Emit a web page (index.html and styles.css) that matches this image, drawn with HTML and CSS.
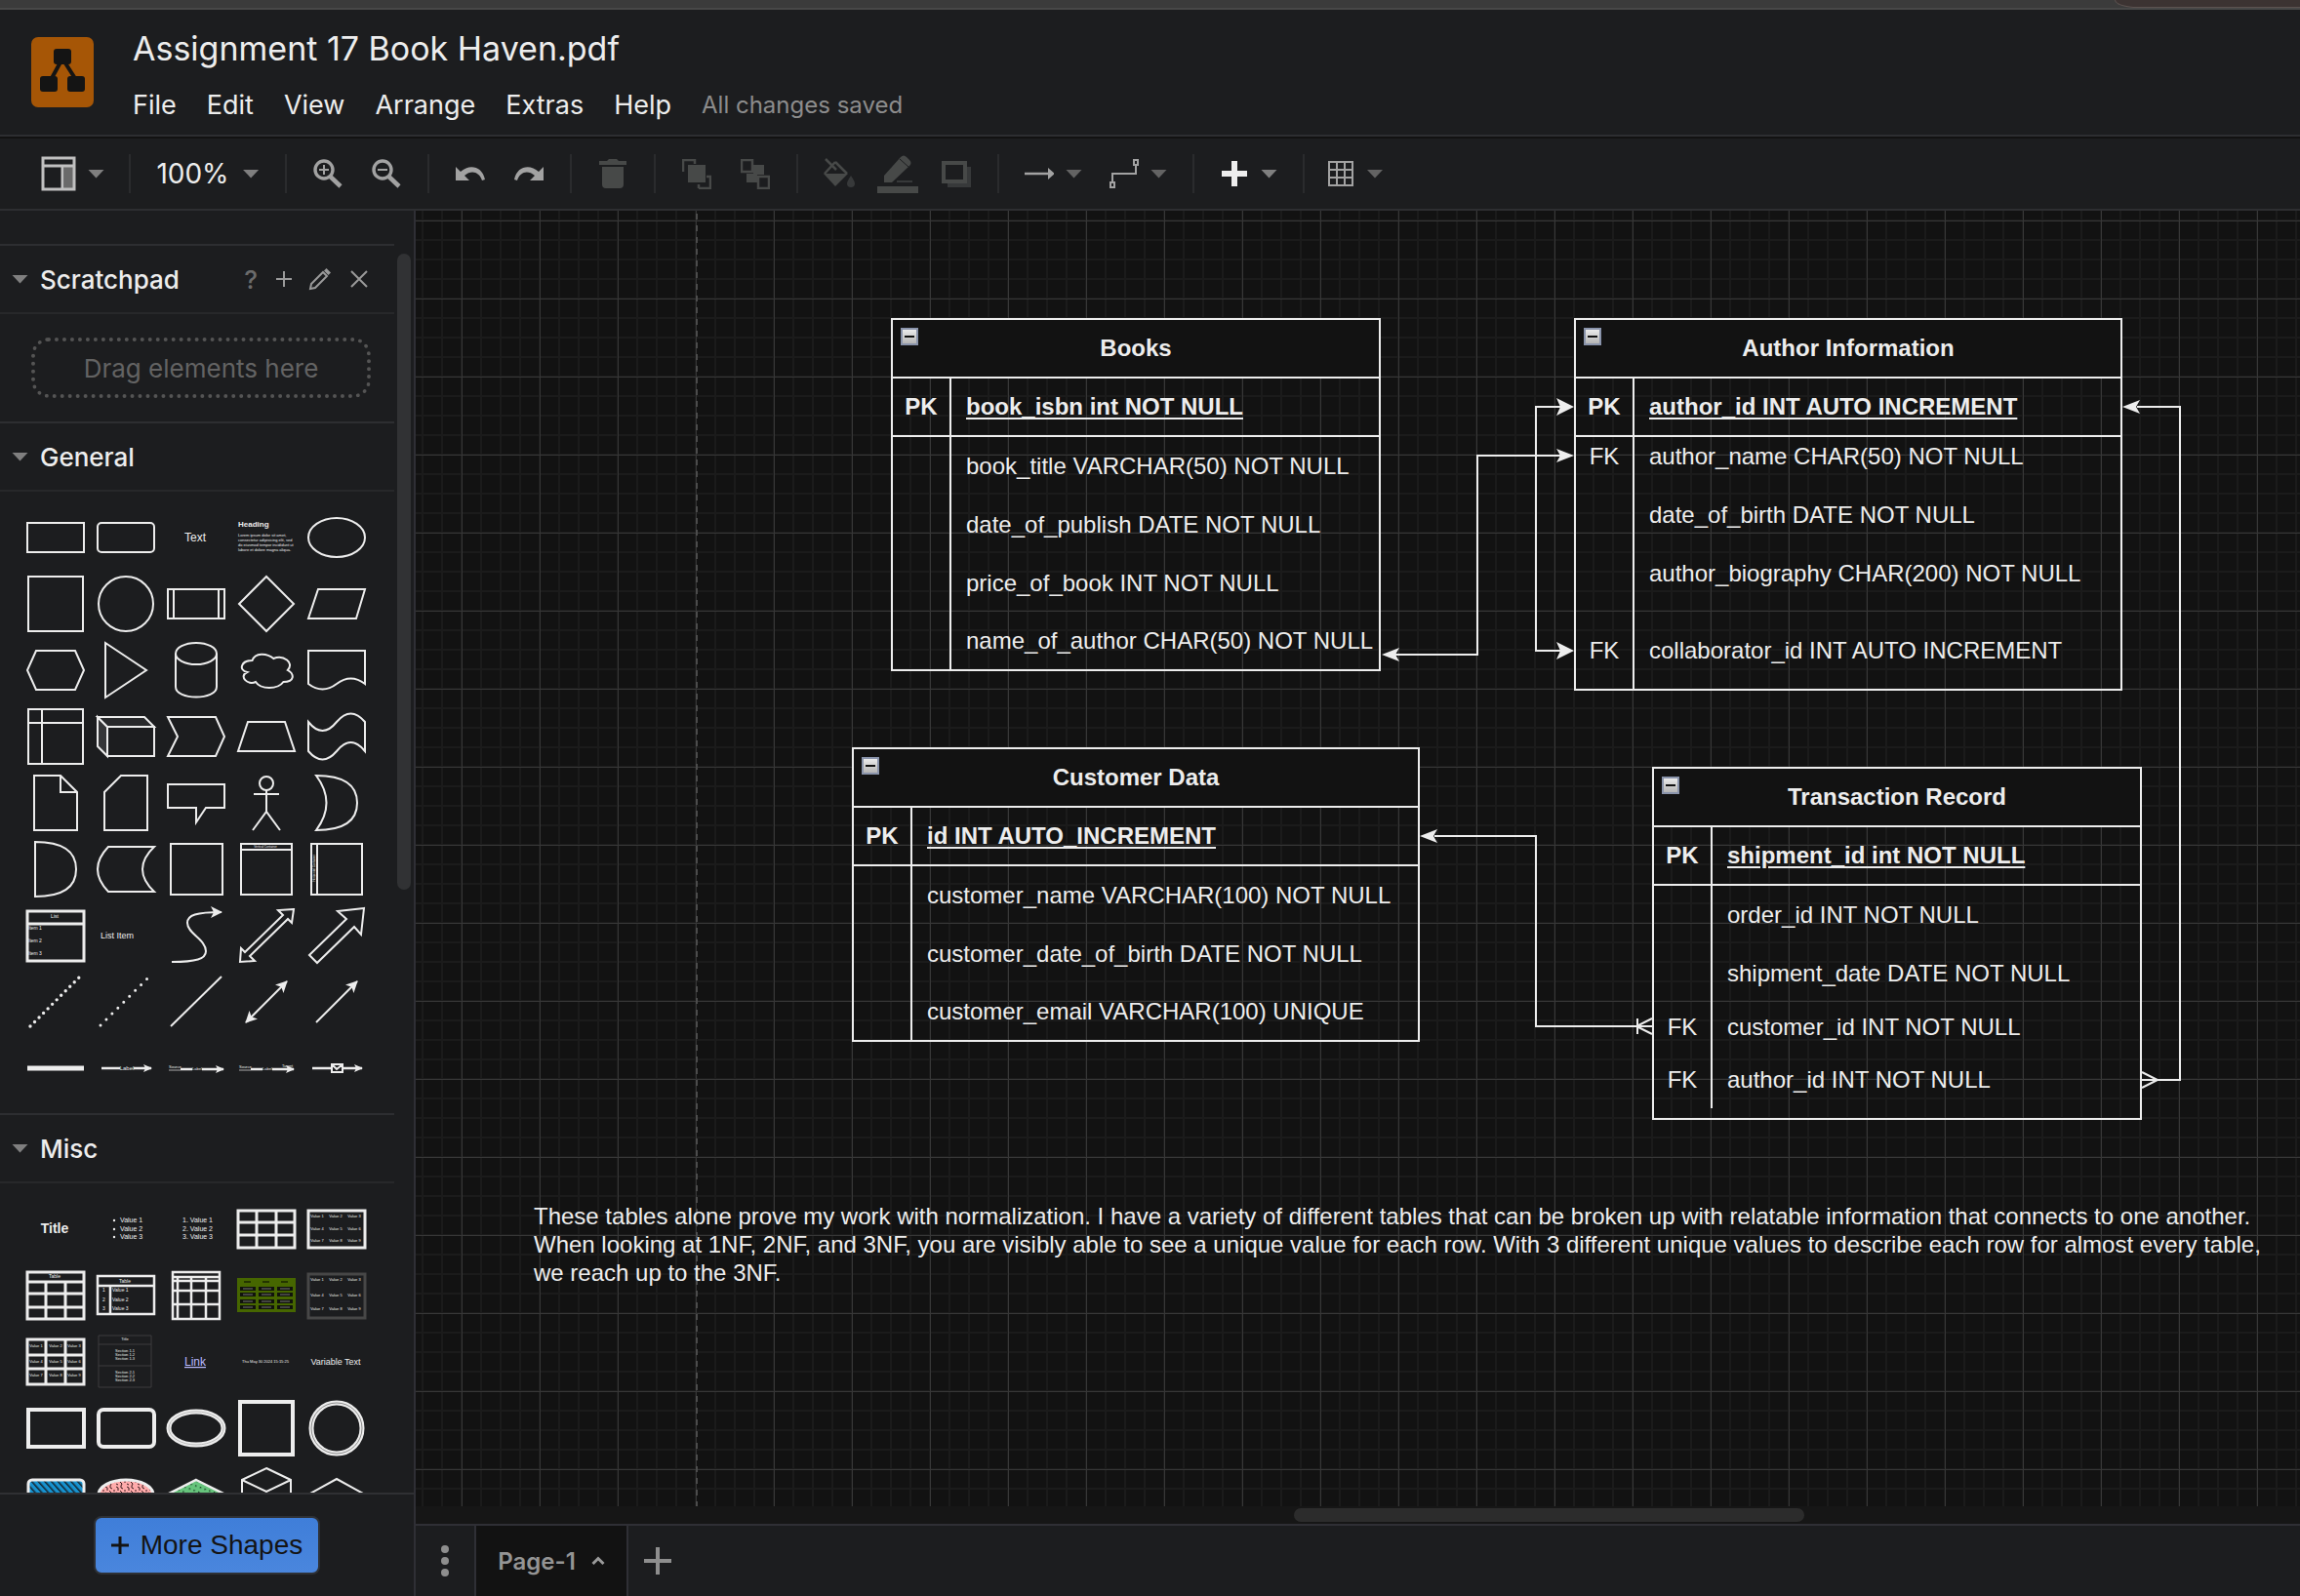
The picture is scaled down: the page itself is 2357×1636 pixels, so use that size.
FILE: index.html
```html
<!DOCTYPE html>
<html lang="en">
<head>
<meta charset="utf-8">
<title>Assignment 17 Book Haven.pdf</title>
<link rel="stylesheet" href="styles.css">
</head>
<body>
<svg class="defs" aria-hidden="true">
  <defs>
    <marker id="tip" viewBox="0 -6 12 12" refX="11" refY="0" markerWidth="12" markerHeight="12" markerUnits="userSpaceOnUse" orient="auto-start-reverse"><path d="M12 0L0 -6L3 0L0 6Z" fill="#ededed"/></marker>
    <marker id="tip-s" viewBox="0 -4 9 8" refX="8" refY="0" markerWidth="9" markerHeight="8" markerUnits="userSpaceOnUse" orient="auto"><path d="M9 0L0 -4L2 0L0 4Z" fill="#ededed"/></marker>
    <pattern id="hatch" width="5" height="5" patternUnits="userSpaceOnUse" patternTransform="rotate(-42)"><rect width="5" height="5" fill="#1792cf"/><rect width="1.5" height="5" fill="#14222c"/></pattern>
    <pattern id="scribble" width="11" height="9" patternUnits="userSpaceOnUse"><rect width="11" height="9" fill="#ffabab"/><path d="M1 1l2 1v3M6 0v2l2 1M5 5l2 2-1 2M10 4v2M1 7l2 1" stroke="#3a1c1e" fill="none"/></pattern>
    <pattern id="dots" width="5" height="5" patternUnits="userSpaceOnUse" patternTransform="rotate(20)"><rect width="5" height="5" fill="#66c47c"/><rect x="1" y="1" width="1.4" height="1.4" fill="#14331e"/></pattern>
  </defs>
</svg>

<div class="app">
  <div class="browser-edge"><span class="browser-tab"></span></div>

  <header class="header">
    <svg class="logo" viewBox="0 0 64 72" role="img" aria-label="draw.io"><rect width="64" height="72" rx="7" fill="#a65606"/><path d="M32 22L20 44M32 22L46 44" stroke="#141414" stroke-width="4"/><g fill="#141414"><rect x="23" y="12" width="18" height="16" rx="3"/><rect x="9" y="40" width="18" height="16" rx="3"/><rect x="37" y="40" width="18" height="16" rx="3"/></g></svg>
    <div class="header-text">
      <h1 class="title">Assignment 17 Book Haven.pdf</h1>
      <nav class="menu">
        <button class="menu-item" type="button">File</button>
        <button class="menu-item" type="button">Edit</button>
        <button class="menu-item" type="button">View</button>
        <button class="menu-item" type="button">Arrange</button>
        <button class="menu-item" type="button">Extras</button>
        <button class="menu-item" type="button">Help</button>
        <span class="status">All changes saved</span>
      </nav>
    </div>
  </header>

  <div class="toolbar" role="toolbar">
    <div class="tools">
      <button class="tool tool-menu" type="button" aria-label="Format panel"><svg width="36" height="36" viewBox="0 0 36 36"><rect x="24" y="11" width="10" height="22" fill="#6a6a6a"/><path d="M2 2H34V34H2ZM2 10H34M22 10V34" fill="none" stroke="#c0c0c0" stroke-width="3"/></svg><span class="caret"></span></button>
    </div>
    <div class="tools">
      <button class="tool tool-zoom" type="button">100%<span class="caret"></span></button>
    </div>
    <div class="tools">
      <button class="tool" type="button" aria-label="Zoom in"><svg width="30" height="30" viewBox="0 0 30 30" fill="none" stroke="#a2a2a2"><circle cx="11" cy="11" r="9" stroke-width="3.4"/><path d="M17.500 18L28 28" stroke-width="4.500"/><path d="M6 11H16M11 6V16" stroke-width="2"/></svg></button>
      <button class="tool" type="button" aria-label="Zoom out"><svg width="30" height="30" viewBox="0 0 30 30" fill="none" stroke="#a2a2a2"><circle cx="11" cy="11" r="9" stroke-width="3.4"/><path d="M17.500 18L28 28" stroke-width="4.500"/><path d="M6 11H16" stroke-width="2"/></svg></button>
    </div>
    <div class="tools">
      <button class="tool" type="button" aria-label="Undo"><svg width="32" height="30" viewBox="0 0 32 30"><path d="M1 8V22H15L10 17C17 11 25 13 28 22L31 21C28 7 15 5 6 13Z" fill="#a2a2a2"/></svg></button>
      <button class="tool" type="button" aria-label="Redo"><svg width="32" height="30" viewBox="0 0 32 30"><path d="M31 8V22H17L22 17C15 11 7 13 4 22L1 21C4 7 17 5 26 13Z" fill="#a2a2a2"/></svg></button>
    </div>
    <div class="tools">
      <button class="tool" type="button" aria-label="Delete"><svg width="30" height="30" viewBox="0 0 30 30" fill="#474948"><path d="M1 2H9L11 0H19L21 2H29V6H1ZM4 8H26V26Q26 30 22 30H8Q4 30 4 26Z"/></svg></button>
    </div>
    <div class="tools">
      <button class="tool" type="button" aria-label="To front"><svg width="30" height="31" viewBox="0 0 30 31"><rect x="6" y="6" width="18" height="18" fill="#474948"/><path d="M1 13V1H13V5M17 30H29V18H25M17 26V30" fill="none" stroke="#474948" stroke-width="2.500"/></svg></button>
      <button class="tool" type="button" aria-label="To back"><svg width="30" height="31" viewBox="0 0 30 31"><path d="M13 6H24V16H17V24H6V15H13Z" fill="#474948"/><path d="M1 1H12V13H1ZM18 18H29V30H18Z" fill="none" stroke="#474948" stroke-width="2.500"/></svg></button>
    </div>
    <div class="tools">
      <button class="tool" type="button" aria-label="Fill color"><svg width="32" height="32" viewBox="0 0 32 32"><path d="M2 1L13 12M12 4L1 16M12 4L24 16" stroke="#474948" stroke-width="2.500" fill="none"/><path d="M0 16H25L12 29Z" fill="#474948"/><path d="M28 18Q32 24 32 26A4 4 0 0 1 24 26Q24 24 28 18Z" fill="#37393a"/></svg></button>
      <button class="tool" type="button" aria-label="Line color"><svg width="42" height="40" viewBox="0 0 42 40"><path d="M7 29V22L24 3Q27 0 30 3L33 6Q36 9 33 12L15 29Z" fill="#474948"/><path d="M23 5L32 13" stroke="#1c1d1f"/><path d="M20 28H36" stroke="#37393a" stroke-width="2"/><rect y="33" width="42" height="7" fill="#474948"/></svg></button>
      <button class="tool" type="button" aria-label="Shadow"><svg width="30" height="27" viewBox="0 0 30 27"><path d="M26 6H30V27H6V23H26Z" fill="#37393a"/><rect x="2" y="2" width="22" height="19" fill="none" stroke="#474948" stroke-width="4"/></svg></button>
    </div>
    <div class="tools">
      <button class="tool tool-menu" type="button" aria-label="Connection"><svg width="30" height="30" viewBox="0 0 30 30"><path d="M0 15H26" stroke="#a2a2a2" stroke-width="2.500"/><path d="M24 9L31 15L24 21Z" fill="#a2a2a2"/></svg><span class="caret caret-dim"></span></button>
      <button class="tool tool-menu" type="button" aria-label="Waypoints"><svg width="30" height="30" viewBox="0 0 30 30" fill="none" stroke="#a2a2a2" stroke-width="2"><rect x="1" y="24" width="4" height="5"/><rect x="25" y="1" width="4" height="5"/><path d="M3 24V15H27V6"/></svg><span class="caret caret-dim"></span></button>
    </div>
    <div class="tools">
      <button class="tool tool-menu" type="button" aria-label="Insert"><svg width="30" height="30" viewBox="0 0 30 30"><path d="M15 2V28M2 15H28" stroke="#ededed" stroke-width="6"/></svg><span class="caret"></span></button>
    </div>
    <div class="tools">
      <button class="tool tool-grid" type="button" aria-label="Table"><svg width="26" height="26" viewBox="0 0 26 26"><path d="M1 1H25V25H1ZM1 9H25M1 17H25M9 1V25M17 1V25" fill="none" stroke="#a2a2a2" stroke-width="2"/></svg><span class="caret caret-dim"></span></button>
    </div>
  </div>

  <div class="workspace">
    <aside class="sidebar">
      <div class="sidebar-scroll">
        <div class="sections">
          <section class="section">
            <div class="section-head"><span class="caret"></span><h2 class="section-title">Scratchpad</h2>
              <div class="section-tools">
                <button class="mini help" type="button">?</button>
                <button class="mini" type="button" aria-label="Add"><svg width="24" height="24" viewBox="0 0 24 24"><path d="M12 4V20M4 12H20" stroke="#9a9a9a" stroke-width="2"/></svg></button>
                <button class="mini mini-wide" type="button" aria-label="Edit"><svg width="24" height="24" viewBox="0 0 24 24"><path d="M2 22L3 17L15 5L19 9L7 21Z" fill="none" stroke="#9a9a9a" stroke-width="2"/><path d="M16 3.500L18.500 1L23 5.500L20.500 8Z" fill="#9a9a9a"/></svg></button>
                <button class="mini mini-wide" type="button" aria-label="Close"><svg width="24" height="24" viewBox="0 0 24 24"><path d="M4 4L20 20M20 4L4 20" stroke="#9a9a9a" stroke-width="2"/></svg></button>
              </div>
            </div>
            <div class="drop-wrap"><div class="drop">Drag elements here</div></div>
          </section>

          <section class="section">
            <div class="section-head"><span class="caret"></span><h2 class="section-title">General</h2></div>
            <div class="palette">
              <svg class="shape" viewBox="-36 -34 72 68"><rect x="-29" y="-15" width="58" height="30"/></svg>
              <svg class="shape" viewBox="-36 -34 72 68"><rect x="-29" y="-15" width="58" height="30" rx="4"/></svg>
              <svg class="shape" viewBox="-36 -34 72 68"><text class="mid t12" x="-1" y="4">Text</text></svg>
              <svg class="shape" viewBox="-36 -34 72 68"><text class="t8 bold" x="-29" y="-11">Heading</text><text class="t4" x="-29" y="-1">Lorem ipsum dolor sit amet,</text><text class="t4" x="-29" y="4">consectetur adipisicing elit, sed</text><text class="t4" x="-29" y="9">do eiusmod tempor incididunt ut</text><text class="t4" x="-29" y="14">labore et dolore magna aliqua.</text></svg>
              <svg class="shape" viewBox="-36 -34 72 68"><ellipse rx="29" ry="20"/></svg>

              <svg class="shape" viewBox="-36 -34 72 68"><rect x="-28" y="-28" width="56" height="56"/></svg>
              <svg class="shape" viewBox="-36 -34 72 68"><circle r="28"/></svg>
              <svg class="shape" viewBox="-36 -34 72 68"><path d="M-29-15H29V15H-29ZM-23-15V15M23-15V15"/></svg>
              <svg class="shape" viewBox="-36 -34 72 68"><path d="M0-28L28 0L0 28L-28 0Z"/></svg>
              <svg class="shape" viewBox="-36 -34 72 68"><path d="M-19-15H29L20 15H-29Z"/></svg>

              <svg class="shape" viewBox="-36 -34 72 68"><path d="M-20-20H20L29 0L20 20H-20L-29 0Z"/></svg>
              <svg class="shape" viewBox="-36 -34 72 68"><path d="M-21-28L21 0L-21 28Z"/></svg>
              <svg class="shape" viewBox="-36 -34 72 68"><ellipse cy="-17" rx="21" ry="11"/><path d="M-21-17V17C-21 31 21 31 21 17V-17"/></svg>
              <svg class="shape" viewBox="-36 -34 72 68"><path d="M-14.500-10C-26-10-29 0-19.700 2C-29 6.400-18.600 16-11 12C-5.800 20 11.600 20 17.400 12C29 12 29 4 21.800 0C29-8 17.400-16 7.300-12C0-18-11.600-18-14.500-10Z"/></svg>
              <svg class="shape" viewBox="-36 -34 72 68"><path d="M-29-20H29V14Q14.500 3 0 14Q-14.500 25-29 14Z"/></svg>

              <svg class="shape" viewBox="-36 -34 72 68"><path d="M-28-28H28V28H-28ZM-28-14H28M-14-28V28"/></svg>
              <svg class="shape" viewBox="-36 -34 72 68"><path d="M-29-20L-19-10V20L-29 10Z" fill="#353638"/><path d="M-29-20H19L29-10H-19Z" fill="#28292b"/><path d="M-19-10H29V20H-19Z"/></svg>
              <svg class="shape" viewBox="-36 -34 72 68"><path d="M-29-20H20L29 0L20 20H-29L-19 0Z"/></svg>
              <svg class="shape" viewBox="-36 -34 72 68"><path d="M-19-15H19L29 15H-29Z"/></svg>
              <svg class="shape" viewBox="-36 -34 72 68"><path d="M-29-15Q-14.500 3 0-15Q14.500-32 29-15V15Q14.500-3 0 15Q-14.500 32-29 15Z"/></svg>

              <svg class="shape" viewBox="-36 -34 72 68"><path d="M-22-28H5L22-11V28H-22ZM5-28V-11H22"/></svg>
              <svg class="shape" viewBox="-36 -34 72 68"><path d="M-5-28H22V28H-22V-11Z"/></svg>
              <svg class="shape" viewBox="-36 -34 72 68"><path d="M-29-19H29V5H10L0 20V5H-29Z"/></svg>
              <svg class="shape" viewBox="-36 -34 72 68"><circle cy="-20" r="7"/><path d="M0-13V9M-13-9H13M-14 28L0 9L14 28"/></svg>
              <svg class="shape" viewBox="-36 -34 72 68"><path d="M-21-28Q21-28 21 0Q21 28-21 28Q0 0-21-28Z"/></svg>

              <svg class="shape" viewBox="-36 -34 72 68"><path d="M-21-28Q21-28 21 0Q21 28-21 28Z"/></svg>
              <svg class="shape" viewBox="-36 -34 72 68"><path d="M-18-23H29Q5 0 29 23H-18Q-40 0-18-23Z"/></svg>
              <svg class="shape" viewBox="-36 -34 72 68"><rect x="-26" y="-26" width="53" height="52"/></svg>
              <svg class="shape" viewBox="-36 -34 72 68"><path d="M-26-26H26V26H-26ZM-26-20H26"/><text class="mid t3" x="-1" y="-22">Vertical Container</text></svg>
              <svg class="shape" viewBox="-36 -34 72 68"><path d="M-26-26H26V26H-26ZM-20-26V26"/><text class="mid t3" transform="rotate(-90)" x="1" y="-22">Horizontal Container</text></svg>

              <svg class="shape" viewBox="-36 -34 72 68"><path d="M-29-25H29V26H-29ZM-29-12H29" stroke-width="3"/><text class="mid t5" x="-1" y="-18">List</text><text class="t5" x="-28" y="-6">Item 1</text><text class="t5" x="-28" y="7">Item 2</text><text class="t5" x="-28" y="20">Item 3</text></svg>
              <svg class="shape" viewBox="-36 -34 72 68"><text class="t9" x="-26" y="3">List Item</text></svg>
              <svg class="shape" viewBox="-36 -34 72 68"><path d="M-25 27C0 27 10 24 10 16C10 4-9-2-9-13C-9-21 0-24 26-24" marker-end="url(#tip)"/></svg>
              <svg class="shape" viewBox="-36 -34 72 68"><path d="M28-27L12-26L17-21L-22 17L-26 13L-27 27L-12 26L-17 21L22-17L26-13Z"/></svg>
              <svg class="shape" viewBox="-36 -34 72 68"><path d="M28-28L1-25L10-17L-28 20L-20 28L18-9L25-1Z"/></svg>

              <svg class="shape" viewBox="-36 -34 72 68"><path d="M-26 25L24-25" stroke-width="3.400" stroke-linecap="round" stroke-dasharray="0 6.400"/></svg>
              <svg class="shape" viewBox="-36 -34 72 68"><path d="M-26 24L22-24" stroke-width="3" stroke-linecap="round" stroke-dasharray="0 8.400"/></svg>
              <svg class="shape" viewBox="-36 -34 72 68"><path d="M-26 25L26-26"/></svg>
              <svg class="shape" viewBox="-36 -34 72 68"><path d="M-21 21L21-21" marker-start="url(#tip)" marker-end="url(#tip)"/></svg>
              <svg class="shape" viewBox="-36 -34 72 68"><path d="M-21 21L21-21" marker-end="url(#tip)"/></svg>

              <svg class="shape" viewBox="-36 -34 72 68"><path d="M-29 0H29" stroke-width="5"/></svg>
              <svg class="shape" viewBox="-36 -34 72 68"><path d="M-25 0H-6M8 0H26" stroke-width="2.500" marker-end="url(#tip-s)"/><text class="mid t6" x="1" y="2">Label</text></svg>
              <svg class="shape" viewBox="-36 -34 72 68"><path d="M-28 2H-16" stroke="#aaa" stroke-width="1"/><path d="M-16 1H-4M6 1H28" stroke-width="2.500" marker-end="url(#tip-s)"/><text class="t4" x="-28" y="0">Source</text><text class="mid t4" x="1" y="2">Label</text></svg>
              <svg class="shape" viewBox="-36 -34 72 68"><path d="M-28 2H-16" stroke="#aaa" stroke-width="1"/><path d="M-16 1H-4M6 1H28" stroke-width="2.500" marker-end="url(#tip-s)"/><text class="t4" x="-28" y="0">Source</text><text class="mid t4" x="1" y="2">Label</text><text class="t4" x="16" y="-1">Target</text></svg>
              <svg class="shape" viewBox="-36 -34 72 68"><path d="M-25 0H-6M6 0H26" stroke-width="2.500" marker-end="url(#tip-s)"/><path d="M-5-4H6V4H-5ZM-4-3L0 1L5-3"/></svg>
            </div>
          </section>

          <section class="section">
            <div class="section-head"><span class="caret"></span><h2 class="section-title">Misc</h2></div>
            <div class="palette">
              <svg class="shape" viewBox="-36 -34 72 68"><text class="mid t14 bold" x="-1" y="4">Title</text></svg>
              <svg class="shape" viewBox="-36 -34 72 68"><g fill="#ededed" stroke="none"><circle cx="-12" cy="-9" r="1.200"/><circle cx="-12" cy="0" r="1.200"/><circle cx="-12" cy="8" r="1.200"/></g><text class="t7" x="-6" y="-7">Value 1</text><text class="t7" x="-6" y="2">Value 2</text><text class="t7" x="-6" y="10">Value 3</text></svg>
              <svg class="shape" viewBox="-36 -34 72 68"><text class="t7" x="-14" y="-7">1. Value 1</text><text class="t7" x="-14" y="2">2. Value 2</text><text class="t7" x="-14" y="10">3. Value 3</text></svg>
              <svg class="shape" viewBox="-36 -34 72 68"><path d="M-29-19H29V19H-29ZM-29-7H29M-29 6H29M-10-19V19M10-19V19" stroke-width="3"/></svg>
              <svg class="shape" viewBox="-36 -34 72 68"><rect x="-29" y="-19" width="58" height="38" stroke-width="3"/><g class="mid t4"><text x="-20" y="-12">Value 1</text><text x="-1" y="-12">Value 2</text><text x="18" y="-12">Value 3</text><text x="-20" y="1">Value 4</text><text x="-1" y="1">Value 5</text><text x="18" y="1">Value 6</text><text x="-20" y="13">Value 7</text><text x="-1" y="13">Value 8</text><text x="18" y="13">Value 9</text></g></svg>

              <svg class="shape" viewBox="-36 -34 72 68"><path d="M-29-24H29V24H-29ZM-29-14H29M-29-2H29M-29 12H29M-10-14V24M10-14V24" stroke-width="3"/><text class="mid t5" x="-1" y="-18">Table</text></svg>
              <svg class="shape" viewBox="-36 -34 72 68"><path d="M-29-20H29V19H-29ZM-29-10H29M-16-10V19" stroke-width="2.500"/><g class="t5"><text x="-1" y="-13" class="mid">Table</text><text x="-24" y="-4">1</text><text x="-24" y="6">2</text><text x="-24" y="15">3</text><text x="-14" y="-4">Value 1</text><text x="-14" y="6">Value 2</text><text x="-14" y="15">Value 3</text></g></svg>
              <svg class="shape" viewBox="-36 -34 72 68"><path d="M-24-24H24V24H-24ZM-24-19H24M-24-15H24M-24-5H24M-24 9H24M-19-19V24M-5-19V24M10-19V24" stroke-width="2.500"/></svg>
              <svg class="shape" viewBox="-36 -34 72 68"><rect x="-30" y="-18" width="60" height="35" fill="#466600" stroke="none"/><path d="M-27-7H-11M-8-7H8M11-7H27M-27-1H-11M-8-1H8M11-1H27M-27 6H-11M-8 6H8M11 6H27M-27 12H-11M-8 12H8M11 12H27" stroke="#11130c" stroke-width="4"/><path d="M-24-7H-14M-5-7H5M14-7H24M-24-1H-14M-5-1H5M14-1H24M-24 6H-14M-5 6H5M14 6H24M-24 12H-14M-5 12H5M14 12H24" stroke="#777" stroke-width="1"/><path d="M-23-14H-16M-4-14H3M15-14H22" stroke="#243500"/></svg>
              <svg class="shape" viewBox="-36 -34 72 68"><rect x="-29" y="-22" width="58" height="45" stroke="#474747" stroke-width="3"/><g class="mid t4"><text x="-20" y="-15">Value 1</text><text x="-1" y="-15">Value 2</text><text x="18" y="-15">Value 3</text><text x="-20" y="1">Value 4</text><text x="-1" y="1">Value 5</text><text x="18" y="1">Value 6</text><text x="-20" y="15">Value 7</text><text x="-1" y="15">Value 8</text><text x="18" y="15">Value 9</text></g></svg>

              <svg class="shape" viewBox="-36 -34 72 68"><path d="M-29-23H29V23H-29ZM-29-7H29M-29 7H29M-10-23V23M10-23V23" stroke-width="3"/><g class="mid t4"><text x="-20" y="-15">Value 1</text><text x="0" y="-15">Value 2</text><text x="19" y="-15">Value 3</text><text x="-20" y="1">Value 4</text><text x="0" y="1">Value 5</text><text x="19" y="1">Value 6</text><text x="-20" y="15">Value 7</text><text x="0" y="15">Value 8</text><text x="19" y="15">Value 9</text></g></svg>
              <svg class="shape" viewBox="-36 -34 72 68"><path d="M-28-27H26V26H-28ZM-28-18H26M-28 4H26" stroke="#3c3d3f" stroke-width="1"/><g class="mid t4"><text x="-1" y="-22">Title</text><text x="-1" y="-10">Section 1.1</text><text x="-1" y="-6">Section 1.2</text><text x="-1" y="-2">Section 1.3</text><text x="-1" y="12">Section 2.1</text><text x="-1" y="16">Section 2.2</text><text x="-1" y="20">Section 2.3</text></g></svg>
              <svg class="shape" viewBox="-36 -34 72 68"><text class="mid t12 link" x="-1" y="4">Link</text></svg>
              <svg class="shape" viewBox="-36 -34 72 68"><text class="mid t4" x="-1" y="1">Thu May 30 2024 15:15:25</text></svg>
              <svg class="shape" viewBox="-36 -34 72 68"><text class="mid t9" x="-1" y="3">Variable Text</text></svg>

              <svg class="shape" viewBox="-36 -34 72 68"><rect x="-28" y="-19" width="57" height="38" stroke-width="4"/></svg>
              <svg class="shape" viewBox="-36 -34 72 68"><rect x="-28" y="-19" width="57" height="38" rx="5" stroke-width="4"/></svg>
              <svg class="shape" viewBox="-36 -34 72 68"><ellipse rx="28" ry="17" stroke-width="5"/><ellipse rx="28" ry="17" stroke="#bcbcbc" stroke-width="1"/></svg>
              <svg class="shape" viewBox="-36 -34 72 68"><rect x="-27" y="-27" width="54" height="54" stroke-width="4"/></svg>
              <svg class="shape" viewBox="-36 -34 72 68"><circle r="26" stroke-width="5"/><circle r="26" stroke="#8a8a8a" stroke-width="1"/></svg>

              <svg class="shape" viewBox="-36 -34 72 68"><rect x="-28" y="-15" width="57" height="34" rx="4" fill="url(#hatch)" stroke-width="3"/></svg>
              <svg class="shape" viewBox="-36 -34 72 68"><ellipse rx="28" ry="15" fill="url(#scribble)" stroke-width="3"/></svg>
              <svg class="shape" viewBox="-36 -34 72 68"><path d="M0-15L30 0L0 15L-30 0Z" fill="url(#dots)" stroke-width="2.500"/></svg>
              <svg class="shape" viewBox="-36 -34 72 68"><path d="M0-27L25-15V15L0 28L-25 15V-15ZM-25-15L0-3L25-15M0-3V28"/></svg>
              <svg class="shape" viewBox="-36 -34 72 68"><path d="M0-16L29 0L0 16L-29 0Z"/></svg>
            </div>
          </section>
        </div>
        <div class="scroll-thumb"></div>
      </div>
      <div class="sidebar-foot"><button class="more" type="button"><svg width="18" height="18" viewBox="0 0 18 18"><path d="M9 0V18M0 9H18" stroke="#141414" stroke-width="3"/></svg>More Shapes</button></div>
    </aside>

    <main class="main">
      <div class="canvas">
        <div class="page-edge"></div>

        <table class="entity books">
          <colgroup><col class="key-col"><col></colgroup>
          <tr><th class="entity-name" colspan="2">Books</th></tr>
          <tr class="primary"><td class="key">PK</td><td class="field"><span>book_isbn int NOT NULL</span></td></tr>
          <tr><td class="key"></td><td class="field">book_title VARCHAR(50) NOT NULL</td></tr>
          <tr><td class="key"></td><td class="field">date_of_publish DATE NOT NULL</td></tr>
          <tr><td class="key"></td><td class="field">price_of_book INT NOT NULL</td></tr>
          <tr class="h58"><td class="key"></td><td class="field">name_of_author CHAR(50) NOT NULL</td></tr>
        </table>

        <table class="entity authors">
          <colgroup><col class="key-col"><col></colgroup>
          <tr><th class="entity-name" colspan="2">Author Information</th></tr>
          <tr class="primary"><td class="key">PK</td><td class="field"><span>author_id INT AUTO INCREMENT</span></td></tr>
          <tr class="h40"><td class="key">FK</td><td class="field">author_name CHAR(50) NOT NULL</td></tr>
          <tr class="h80"><td class="key"></td><td class="field">date_of_birth DATE NOT NULL</td></tr>
          <tr class="h40"><td class="key"></td><td class="field">author_biography CHAR(200) NOT NULL</td></tr>
          <tr class="h20"><td class="key"></td><td class="field"></td></tr>
          <tr class="h78"><td class="key">FK</td><td class="field">collaborator_id INT AUTO INCREMENT</td></tr>
        </table>

        <table class="entity customers">
          <colgroup><col class="key-col"><col></colgroup>
          <tr><th class="entity-name" colspan="2">Customer Data</th></tr>
          <tr class="primary"><td class="key">PK</td><td class="field"><span>id INT AUTO_INCREMENT</span></td></tr>
          <tr><td class="key"></td><td class="field">customer_name VARCHAR(100) NOT NULL</td></tr>
          <tr><td class="key"></td><td class="field">customer_date_of_birth DATE NOT NULL</td></tr>
          <tr class="h58"><td class="key"></td><td class="field">customer_email VARCHAR(100) UNIQUE</td></tr>
        </table>

        <table class="entity transactions">
          <colgroup><col class="key-col"><col></colgroup>
          <tr><th class="entity-name" colspan="2">Transaction Record</th></tr>
          <tr class="primary"><td class="key">PK</td><td class="field"><span>shipment_id int NOT NULL</span></td></tr>
          <tr><td class="key"></td><td class="field">order_id INT NOT NULL</td></tr>
          <tr><td class="key"></td><td class="field">shipment_date DATE NOT NULL</td></tr>
          <tr class="h50"><td class="key">FK</td><td class="field">customer_id INT NOT NULL</td></tr>
          <tr class="h58"><td class="key">FK</td><td class="field">author_id INT NOT NULL</td></tr>
          <tr class="h10"><td colspan="2"></td></tr>
        </table>

        <button class="fold books-fold" type="button" aria-label="Collapse Books"></button>
        <button class="fold authors-fold" type="button" aria-label="Collapse Author Information"></button>
        <button class="fold customers-fold" type="button" aria-label="Collapse Customer Data"></button>
        <button class="fold transactions-fold" type="button" aria-label="Collapse Transaction Record"></button>

        <svg class="links" width="1931" height="1328" aria-hidden="true">
          <g transform="translate(-426 -216)" fill="none" stroke="#ededed" stroke-width="2">
            <path d="M1430 671H1514V467H1600"/>
            <path d="M1600 417H1574V667H1600"/>
            <path d="M2190 417H2234V1107H2195M2195 1099L2211 1107L2195 1115"/>
            <path d="M1470 857H1574V1052H1693M1693 1044L1677 1052L1693 1060M1678 1044V1060"/>
            <g fill="#ededed" stroke="none">
              <path d="M1416 671l18-7l-4 7l4 7z"/>
              <path d="M1613 467l-18-7l4 7l-4 7z"/>
              <path d="M1613 417l-18-9l4 9l-4 9z"/>
              <path d="M1613 667l-18-9l4 9l-4 9z"/>
              <path d="M2175 417l18-7l-4 7l4 7z"/>
              <path d="M1455 857l18-7l-4 7l4 7z"/>
            </g>
          </g>
        </svg>

        <p class="note">These tables alone prove my work with normalization. I have a variety of different tables that can be broken up with relatable information that connects to one another.<br>When looking at 1NF, 2NF, and 3NF, you are visibly able to see a unique value for each row. With 3 different unique values to describe each row for almost every table,<br>we reach up to the 3NF.</p>
      </div>
      <div class="hscroll"><div class="hscroll-thumb"></div></div>
      <footer class="tabs">
        <button class="tab-menu" type="button" aria-label="Pages"><svg width="8" height="32" viewBox="0 0 8 32" fill="#8e8e8e"><circle cx="4" cy="4" r="4"/><circle cx="4" cy="16" r="4"/><circle cx="4" cy="28" r="4"/></svg></button>
        <button class="tab" type="button">Page-1<svg width="14" height="10" viewBox="0 0 14 10"><path d="M1.500 8L7 2.500L12.500 8" fill="none" stroke="#9a9a9a" stroke-width="3"/></svg></button>
        <button class="tab-add" type="button" aria-label="Insert page"><svg width="28" height="28" viewBox="0 0 28 28"><path d="M14 0V28M0 14H28" stroke="#8e8e8e" stroke-width="4"/></svg></button>
      </footer>
    </main>
  </div>
</div>
</body>
</html>
```

FILE: styles.css
```css
:root {
  --panel: #1c1d1f;
  --canvas: #121212;
  --line: #2d2e31;
  --text: #ededed;
  --ui: Inter, "Liberation Sans", sans-serif;
  --diagram: "Liberation Sans", Arial, sans-serif;
}

* { box-sizing: border-box; }

body {
  margin: 0;
  background: var(--panel);
  color: var(--text);
  font-family: var(--ui);
  font-size: 26px;
}

button {
  margin: 0;
  padding: 0;
  border: 0;
  background: none;
  color: inherit;
  font: inherit;
}

svg { display: block; }
.defs { position: absolute; width: 0; height: 0; }

.app {
  display: flex;
  flex-direction: column;
  height: 100vh;
  overflow: hidden;
}

.browser-edge {
  display: flex;
  justify-content: flex-end;
  flex: none;
  height: 10px;
  background: #3b3b3b;
  border-bottom: 2px solid #484848;
}
.browser-tab {
  width: 190px;
  background: #3c3332;
  border: solid #5c5250;
  border-width: 0 0 1px 1px;
  border-bottom-left-radius: 24px 8px;
}

/* Header */
.header {
  display: flex;
  flex: none;
  gap: 40px;
  height: 130px;
  padding: 16px 32px 0;
  border-bottom: 2px solid var(--line);
}
.logo { width: 64px; height: 72px; margin-top: 12px; flex: none; }
.title { margin: 0; font-size: 34px; font-weight: 400; line-height: 48px; }
.menu { display: flex; align-items: center; gap: 31px; height: 66px; font-size: 27px; }
.status { font-size: 24px; color: #8c8c8c; }

/* Toolbar */
.toolbar {
  display: flex;
  align-items: center;
  flex: none;
  height: 76px;
  padding-left: 19px;
  border-top: 2px solid #121212;
  border-bottom: 2px solid var(--line);
}
.tools {
  display: flex;
  height: 40px;
  padding: 0 12px;
  border-left: 2px solid #2a2b2d;
}
.tools:first-child { padding-right: 14px; border-left: 0; }
.tool {
  display: flex;
  align-items: center;
  justify-content: center;
  width: 60px;
}
.tool-menu { width: 87px; gap: 12px; }
.tool-zoom { width: 134px; gap: 14px; font-size: 28px; }
.tool-grid { width: 80px; gap: 14px; }
.caret {
  flex: none;
  width: 17px;
  height: 9px;
  background: #7f7f7f;
  clip-path: polygon(0 0, 100% 0, 50% 100%);
}
.caret-dim { background: #636363; }

/* Sidebar */
.workspace { display: flex; flex: 1; min-height: 0; }
.sidebar {
  display: flex;
  flex-direction: column;
  flex: none;
  width: 426px;
  border-right: 2px solid #2f2f35;
}
.sidebar-scroll {
  display: flex;
  gap: 3px;
  flex: 1;
  min-height: 0;
  overflow: hidden;
}
.sections { width: 404px; padding-top: 34px; }
.section { border-top: 2px solid var(--line); }
.section-head {
  display: flex;
  align-items: center;
  gap: 12px;
  height: 70px;
  padding-left: 12px;
  border-bottom: 2px solid #27282a;
}
.section-title { margin: 0; font-size: 26px; font-weight: 500; }
.section-tools { display: flex; align-items: center; margin-left: auto; padding-right: 16px; }
.mini { display: flex; align-items: center; justify-content: center; width: 34px; height: 32px; }
.mini-wide { width: 40px; }
.help { color: #6b6b6b; font-weight: 500; }
.drop-wrap { padding: 24px 24px 24px 32px; }
.drop {
  display: flex;
  align-items: center;
  justify-content: center;
  height: 62px;
  border: 4px dotted #545454;
  border-radius: 18px;
  color: #636363;
}
.palette {
  display: grid;
  grid-template-columns: repeat(5, 72px);
  grid-auto-rows: 68px;
  padding: 13px 0 12px 21px;
}
.shape {
  width: 72px;
  height: 68px;
  fill: none;
  stroke: var(--text);
  stroke-width: 2;
  font-family: var(--diagram);
}
.shape text { fill: var(--text); stroke: none; }
.mid { text-anchor: middle; }
.bold { font-weight: 700; }
.t3 { font-size: 3px; }
.t4 { font-size: 4px; }
.t5 { font-size: 5px; }
.t6 { font-size: 6px; }
.t7 { font-size: 7px; }
.t8 { font-size: 8px; }
.t9 { font-size: 9px; }
.t12 { font-size: 12px; }
.t14 { font-size: 14px; }
.shape .link { fill: #b9b9ff; text-decoration: underline; }
.scroll-thumb {
  width: 14px;
  height: 652px;
  margin-top: 44px;
  border-radius: 7px;
  background: #313234;
}
.sidebar-foot {
  display: flex;
  align-items: center;
  justify-content: center;
  flex: none;
  height: 106px;
  border-top: 2px solid #2f3033;
}
.more {
  display: flex;
  align-items: center;
  justify-content: center;
  gap: 12px;
  width: 232px;
  height: 60px;
  border: 2px solid #2e3136;
  border-radius: 8px;
  background: linear-gradient(#3f7ed9, #4a86dd);
  color: #141414;
  font-family: var(--diagram);
  font-size: 28px;
}

/* Diagram */
.main { display: flex; flex-direction: column; flex: 1; min-width: 0; }
.canvas {
  position: relative;
  flex: 1;
  min-height: 0;
  overflow: hidden;
  background-color: var(--canvas);
  background-image:
    linear-gradient(90deg, #373737 1px, transparent 1px),
    linear-gradient(#373737 1px, transparent 1px),
    linear-gradient(90deg, #1b1b1b 2px, transparent 2px),
    linear-gradient(#1b1b1b 2px, transparent 2px);
  background-size: 80px 80px, 80px 80px, 20px 20px, 20px 20px;
  background-position: 47px 0, 0 10px, 6px 0, 0 9px;
}
.page-edge {
  position: absolute;
  left: 287px;
  top: 0;
  bottom: 0;
  width: 2px;
  background: repeating-linear-gradient(transparent 0 3px, #4c4c4c 3px 9px, transparent 9px 12px);
}
.entity {
  position: absolute;
  border: 2px solid var(--text);
  border-collapse: separate;
  border-spacing: 0;
  table-layout: fixed;
  font-family: var(--diagram);
  font-size: 24px;
  line-height: 28px;
  white-space: nowrap;
}
.entity tr { height: 60px; }
.entity .h10 { height: 10px; }
.entity .h20 { height: 20px; }
.entity .h40 { height: 40px; }
.entity .h50 { height: 50px; }
.entity .h58 { height: 58px; }
.entity .h78 { height: 78px; }
.entity .h80 { height: 80px; }
.entity th, .entity td { padding: 0 0 1px; }
.key-col { width: 60px; }
.entity-name { background: var(--canvas); border-bottom: 2px solid var(--text); font-weight: 700; }
.key { border-right: 2px solid var(--text); text-align: center; }
.entity .field { padding-left: 15px; text-align: left; }
.primary td { border-bottom: 2px solid var(--text); font-weight: 700; }
.primary span { text-decoration: underline; text-decoration-thickness: 2px; text-underline-offset: 3px; }
.books { left: 487px; top: 110px; width: 502px; }
.authors { left: 1187px; top: 110px; width: 562px; }
.customers { left: 447px; top: 550px; width: 582px; }
.transactions { left: 1267px; top: 570px; width: 502px; }
.fold {
  position: absolute;
  width: 18px;
  height: 18px;
  border: 2px solid #8a94ab;
  background: linear-gradient(#111, #111) center / 10px 2px no-repeat, linear-gradient(#ebebeb, #b5b5b5);
}
.books-fold { left: 497px; top: 120px; }
.authors-fold { left: 1197px; top: 120px; }
.customers-fold { left: 457px; top: 560px; }
.transactions-fold { left: 1277px; top: 580px; }
.links { position: absolute; left: 0; top: 0; }
.note {
  position: absolute;
  left: 121px;
  top: 1016px;
  margin: 0;
  font-family: var(--diagram);
  font-size: 24px;
  line-height: 29px;
  white-space: nowrap;
}

/* Page bar */
.hscroll { flex: none; height: 18px; padding: 2px 0 2px 900px; background: #161616; }
.hscroll-thumb { width: 523px; height: 14px; border-radius: 7px; background: #2c2c2c; }
.tabs {
  display: flex;
  flex: none;
  height: 74px;
  border-top: 2px solid #2f2f35;
}
.tab-menu, .tab, .tab-add { display: flex; align-items: center; justify-content: center; }
.tab-menu { width: 60px; }
.tab {
  gap: 16px;
  width: 158px;
  border: solid #2f2f35;
  border-width: 0 2px;
  background: var(--canvas);
  color: #949494;
  font-size: 24px;
  font-weight: 600;
}
.tab-add { width: 60px; }
```
